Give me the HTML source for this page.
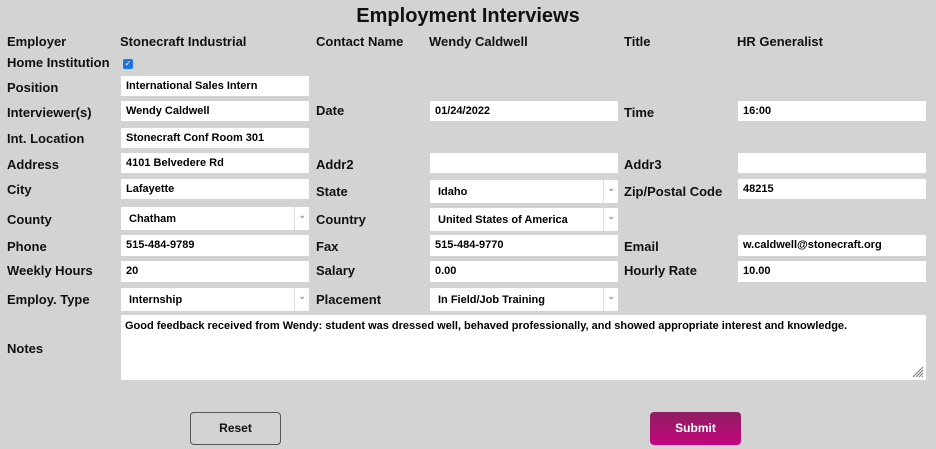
<!DOCTYPE html>
<html><head><meta charset="utf-8"><style>
body{margin:0;width:936px;height:449px;background:#d3d3d3;font-family:"Liberation Sans",sans-serif;position:relative;overflow:hidden}
.l{position:absolute;font-weight:bold;font-size:13px;color:#111;line-height:16px;transform:translateY(-7px)}
.i{position:absolute;background:#fff;height:20px;font-size:11px;font-weight:bold;line-height:21px;padding-left:5px;box-sizing:border-box;color:#000}
.s{position:absolute;background:#fff;height:23px;font-size:11px;font-weight:bold;line-height:25px;padding-left:8px;box-sizing:border-box;width:188px}
.s:after{content:"";position:absolute;right:0;top:0;width:14px;height:23px;border-left:1px solid #ddd;background:#fff}
.s:before{content:"⌄";position:absolute;right:3px;top:-4px;font-size:9px;color:#999;z-index:1}
.c1{left:121px;width:188px}.c2{left:430px;width:188px}.c3{left:738px;width:188px}
</style></head><body>
<div style="position:absolute;left:0;width:936px;top:5px;text-align:center;font-size:20px;font-weight:bold;color:#111">Employment Interviews</div>
<div class="l" style="left:7px;top:41px">Employer</div>
<div class="l" style="left:120px;top:41px">Stonecraft Industrial</div>
<div class="l" style="left:316px;top:41px">Contact Name</div>
<div class="l" style="left:429px;top:41px">Wendy Caldwell</div>
<div class="l" style="left:624px;top:41px">Title</div>
<div class="l" style="left:737px;top:41px">HR Generalist</div>
<div class="l" style="left:7px;top:62px">Home Institution</div>
<div style="position:absolute;left:123px;top:59px;width:10px;height:10px;background:#1a73e8;border-radius:2px;color:#fff;font-size:8px;line-height:10px;text-align:center">✓</div>
<div class="l" style="left:7px;top:87px">Position</div><div class="i c1" style="top:76px">International Sales Intern</div>
<div class="l" style="left:7px;top:112px">Interviewer(s)</div><div class="i c1" style="top:101px">Wendy Caldwell</div>
<div class="l" style="left:316px;top:110px">Date</div><div class="i c2" style="top:101px">01/24/2022</div>
<div class="l" style="left:624px;top:112px">Time</div><div class="i c3" style="top:101px">16:00</div>
<div class="l" style="left:7px;top:138px">Int. Location</div><div class="i c1" style="top:128px">Stonecraft Conf Room 301</div>
<div class="l" style="left:7px;top:164px">Address</div><div class="i c1" style="top:153px">4101 Belvedere Rd</div>
<div class="l" style="left:316px;top:164px">Addr2</div><div class="i c2" style="top:153px"></div>
<div class="l" style="left:624px;top:164px">Addr3</div><div class="i c3" style="top:153px"></div>
<div class="l" style="left:7px;top:189px">City</div><div class="i c1" style="top:179px">Lafayette</div>
<div class="l" style="left:316px;top:191px">State</div><div class="s" style="left:430px;top:180px">Idaho</div>
<div class="l" style="left:624px;top:191px">Zip/Postal Code</div><div class="i c3" style="top:179px">48215</div>
<div class="l" style="left:7px;top:219px">County</div><div class="s" style="left:121px;top:207px">Chatham</div>
<div class="l" style="left:316px;top:219px">Country</div><div class="s" style="left:430px;top:208px">United States of America</div>
<div class="l" style="left:7px;top:246px">Phone</div><div class="i c1" style="top:235px;height:21px">515-484-9789</div>
<div class="l" style="left:316px;top:246px">Fax</div><div class="i c2" style="top:235px;height:21px">515-484-9770</div>
<div class="l" style="left:624px;top:246px">Email</div><div class="i c3" style="top:235px;height:21px">w.caldwell@stonecraft.org</div>
<div class="l" style="left:7px;top:270px">Weekly Hours</div><div class="i c1" style="top:261px;height:21px">20</div>
<div class="l" style="left:316px;top:270px">Salary</div><div class="i c2" style="top:261px;height:21px">0.00</div>
<div class="l" style="left:624px;top:270px">Hourly Rate</div><div class="i c3" style="top:261px;height:21px">10.00</div>
<div class="l" style="left:7px;top:299px">Employ. Type</div><div class="s" style="left:121px;top:288px">Internship</div>
<div class="l" style="left:316px;top:299px">Placement</div><div class="s" style="left:430px;top:288px">In Field/Job Training</div>
<div class="l" style="left:7px;top:348px">Notes</div>
<div style="position:absolute;left:121px;top:315px;width:805px;height:65px;background:#fff;font-size:11px;font-weight:bold;padding:5px 4px;box-sizing:border-box">Good feedback received from Wendy: student was dressed well, behaved professionally, and showed appropriate interest and knowledge.
<svg style="position:absolute;right:2px;bottom:2px" width="12" height="12"><path d="M11 1L1 11M11 4L4 11M11 7L7 11M11 10L10 11" stroke="#777" stroke-width="1"/></svg></div>
<div style="position:absolute;left:190px;top:412px;width:91px;height:33px;box-sizing:border-box;border:1px solid #555;border-radius:4px;text-align:center;line-height:31px;font-size:12px;font-weight:bold;color:#111">Reset</div>
<div style="position:absolute;left:650px;top:412px;width:91px;height:33px;border-radius:4px;background:linear-gradient(#8e1e60,#c2067e);text-align:center;line-height:33px;font-size:12px;font-weight:bold;color:#fff">Submit</div>
</body></html>
